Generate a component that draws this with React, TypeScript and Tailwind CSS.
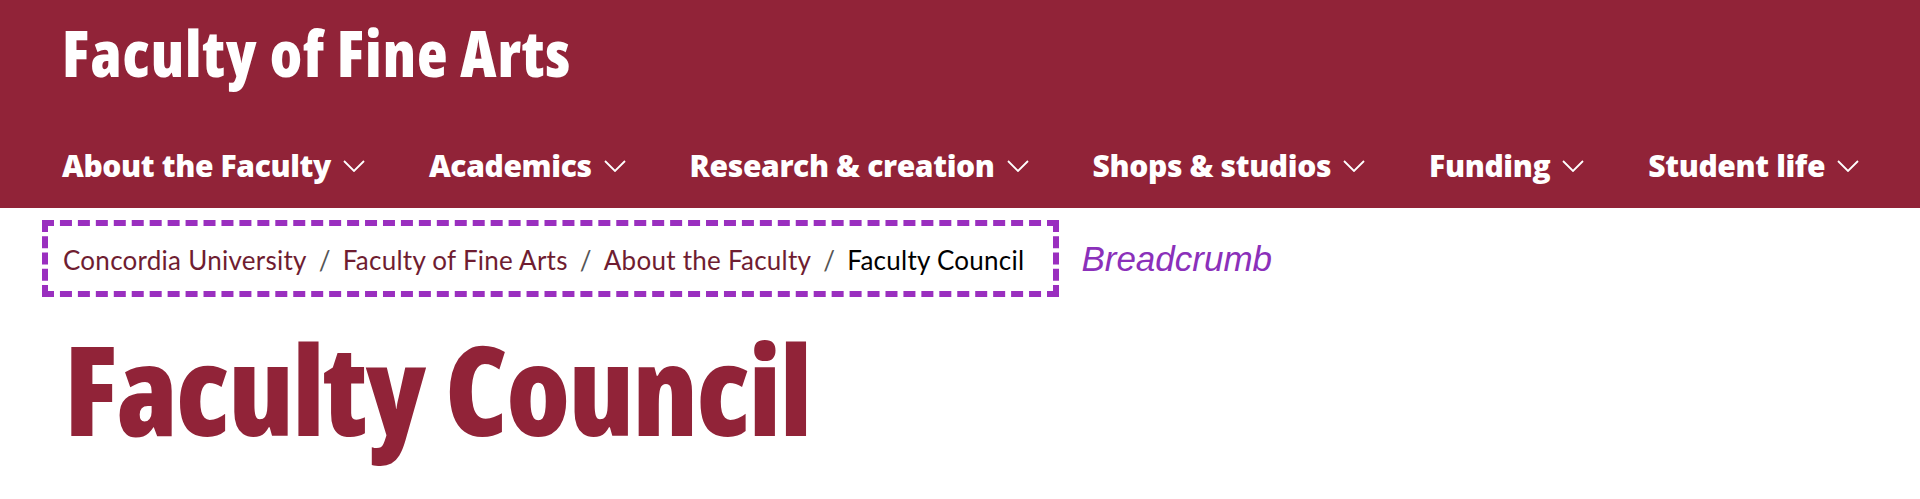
import React from "react";

const navItems = [
  "About the Faculty",
  "Academics",
  "Research & creation",
  "Shops & studios",
  "Funding",
  "Student life",
];

const crumbs = ["Concordia University", "Faculty of Fine Arts", "About the Faculty"];

const display = { fontFamily: "'Open Sans', sans-serif", fontStretch: "75%" };
const navFont = { fontFamily: "'Open Sans', sans-serif", fontStretch: "90%" };

function Chevron() {
  return (
    <svg width="22" height="12" viewBox="0 0 22 12" fill="none" className="shrink-0">
      <polyline points="1,1 11,11 21,1" stroke="white" strokeWidth="1.8" />
    </svg>
  );
}

export default function App() {
  return (
    <div className="min-h-[499px] bg-white">
      <header className="bg-[#912338] px-[62px] pt-[21px] pb-[27px]">
        <a
          href="#"
          className="block text-[63px] leading-none font-extrabold tracking-[0.015em] text-white"
          style={display}
        >
          Faculty of Fine Arts
        </a>
        <nav className="mt-[67px] flex items-center gap-[64px]">
          {navItems.map((item) => (
            <button key={item} className="flex items-center gap-[12px] text-white">
              <span
                className="text-[30px] leading-none font-extrabold tracking-[-0.012em] whitespace-nowrap"
                style={navFont}
              >
                {item}
              </span>
              <Chevron />
            </button>
          ))}
        </nav>
      </header>

      <div className="mt-[12px] flex items-center pl-[42px]">
        <ol
          className="flex items-center border-[6px] border-dashed border-[#9a2fbf] pt-[21px] pb-[18px] pl-[15px] pr-[29px] text-[26px] leading-none tracking-[0.01em]"
          style={{ fontFamily: "Lato, sans-serif" }}
        >
          {crumbs.map((c) => (
            <li key={c} className="flex items-center">
              <a href="#" className="text-[#6f1d31]">
                {c}
              </a>
              <span className="mx-[12px] text-[#555]">/</span>
            </li>
          ))}
          <li className="text-black">Faculty Council</li>
        </ol>
        <span
          className="ml-[22px] text-[35px] leading-none italic text-[#8b30ba]"
          style={{ fontFamily: "'Liberation Sans', Arial, sans-serif" }}
        >
          Breadcrumb
        </span>
      </div>

      <h1
        className="mt-[29px] pl-[64px] text-[124px] leading-none font-extrabold tracking-[-0.013em] text-[#912338]"
        style={display}
      >
        Faculty Council
      </h1>
    </div>
  );
}
